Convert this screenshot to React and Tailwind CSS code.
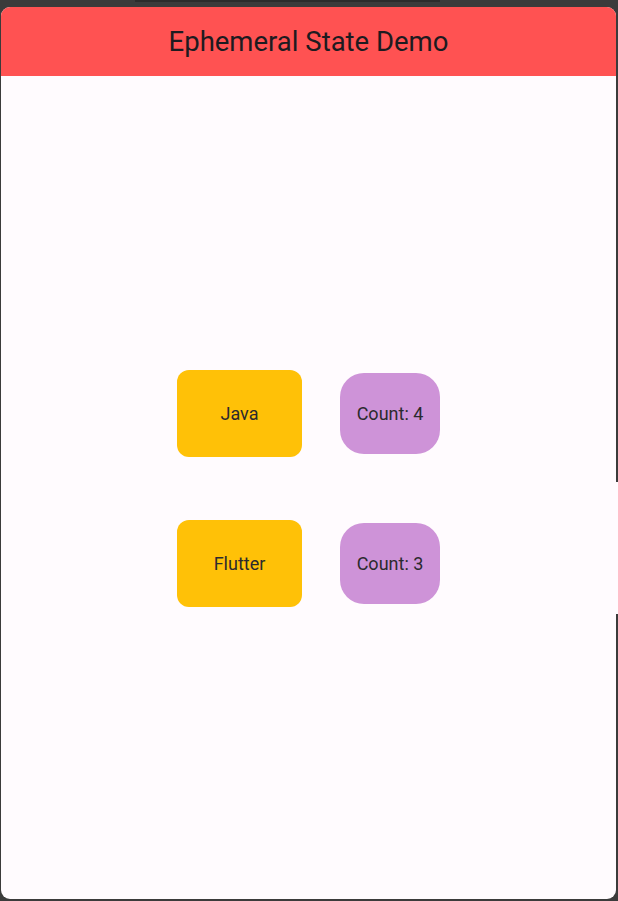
import React, { useState } from 'react';

const App = () => {
  const [counts, setCounts] = useState({ Java: 4, Flutter: 3 });

  const bump = (name) => {
    setCounts((c) => ({ ...c, [name]: c[name] + 1 }));
  };

  return (
    <div className="relative h-[901px] w-[618px] bg-[#3b3b3b] pt-[7px] pb-[2px] pl-[1px] pr-[2px] font-['Roboto',sans-serif]">
      {/* top strip */}
      <div className="absolute left-[135px] top-0 h-[2px] w-[305px] bg-[#2c2c2c]" />

      <div className="flex h-full flex-col overflow-hidden rounded-[9px] bg-[#fffbfe]">
        {/* App bar */}
        <div className="flex h-[69px] shrink-0 items-center justify-center bg-[#ff5252]">
          <h1 className="text-[27.5px] leading-none text-[#1d1b20]">Ephemeral State Demo</h1>
        </div>

        {/* Body */}
        <div className="flex flex-1 flex-col items-center justify-center gap-[63px] pt-[2px]">
          {Object.keys(counts).map((name) => (
            <div key={name} className="flex items-center gap-[38px]">
              <button
                onClick={() => bump(name)}
                className="flex h-[87px] w-[125px] items-center justify-center rounded-[12px] bg-[#ffc107] text-[18px] text-[#2b2a2e]"
              >
                {name}
              </button>
              <div className="flex h-[81px] w-[100px] items-center justify-center rounded-[24px] bg-[#ce93d8] text-[18px] text-[#2b2a2e]">
                Count: {counts[name]}
              </div>
            </div>
          ))}
        </div>
      </div>

      {/* right edge gap */}
      <div className="absolute right-0 top-[482px] h-[132px] w-[2px] bg-[#fffbfe]" />
    </div>
  );
};

export default App;
